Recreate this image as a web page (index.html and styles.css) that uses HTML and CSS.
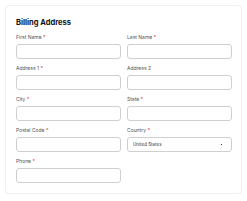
FILE: index.html
```html
<!DOCTYPE html>
<html lang="en">
<head>
    <meta charset="UTF-8">
    <meta name="viewport" content="width=device-width, initial-scale=1.0">
    <title>Billing Address</title>
    <link rel="stylesheet" href="styles.css">
</head>
<body>
    <div class="card">
        <div class="card-title">Billing Address</div>
        <div class="form-grid">
            <div class="field">
                <label>First Name <span class="req">*</span></label>
                <input type="text">
            </div>
            <div class="field">
                <label>Last Name <span class="req">*</span></label>
                <input type="text">
            </div>
            <div class="field">
                <label>Address 1 <span class="req">*</span></label>
                <input type="text">
            </div>
            <div class="field">
                <label>Address 2</label>
                <input type="text">
            </div>
            <div class="field">
                <label>City <span class="req">*</span></label>
                <input type="text">
            </div>
            <div class="field">
                <label>State <span class="req">*</span></label>
                <input type="text">
            </div>
            <div class="field">
                <label>Postal Code <span class="req">*</span></label>
                <input type="text">
            </div>
            <div class="field">
                <label>Country <span class="req">*</span></label>
                <div class="select">
                    <span>United States</span>
                    <span class="arrow"></span>
                </div>
            </div>
            <div class="field">
                <label>Phone <span class="req">*</span></label>
                <input type="text">
            </div>
        </div>
    </div>
</body>
</html>
```

FILE: styles.css
```css
body {
    margin: 5px;
    background-color: #fff;
    font-family: Inter, 'Noto Sans', sans-serif;
    color: #333;
}

.card {
    width: 237px;
    box-sizing: border-box;
    padding: 11px 11px 10px 10px;
    background-color: #fff;
    border: 1px solid #f0f0f0;
    border-radius: 4px;
    box-shadow: 0 1px 3px rgba(0, 0, 0, 0.06);
}

.card-title {
    font-size: 7.5px;
    font-weight: 700;
    line-height: 12px;
    color: #111;
    margin-bottom: 4px;
}

.form-grid {
    display: grid;
    grid-template-columns: 105px 105px;
    column-gap: 6px;
    row-gap: 5px;
}

.field {
    display: flex;
    flex-direction: column;
}

.field label {
    font-size: 5px;
    line-height: 8px;
    color: #555;
    margin-bottom: 3px;
}

.req {
    color: #d33;
}

.field input,
.select {
    height: 15px;
    box-sizing: border-box;
    border: 1px solid #cfcfcf;
    border-radius: 3px;
    background-color: #fff;
    margin: 0;
    padding: 0 5px;
}

.select {
    display: flex;
    align-items: center;
    justify-content: space-between;
    font-size: 4.5px;
    color: #333;
}

.arrow {
    width: 1px;
    height: 1px;
    background-color: #333;
    margin-right: 4px;
}
```
